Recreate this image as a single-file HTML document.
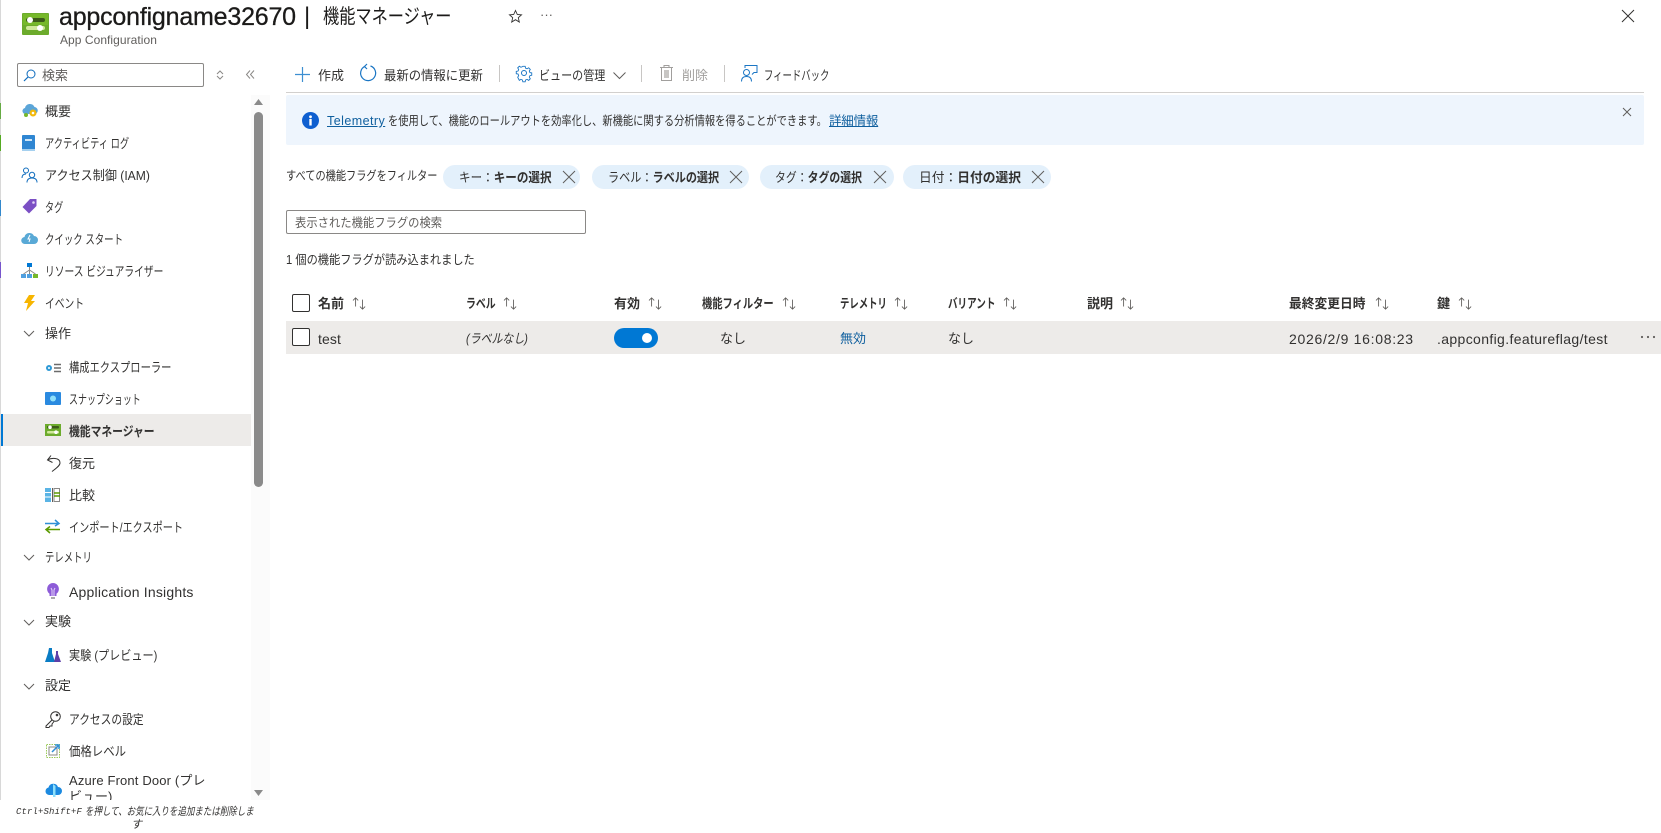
<!DOCTYPE html>
<html lang="ja"><head><meta charset="utf-8"><title>機能マネージャー</title>
<style>
html,body{margin:0;padding:0;background:#fff}
body{width:1661px;height:833px;overflow:hidden;position:relative;font-family:"Liberation Sans","Noto Sans CJK JP",sans-serif;font-size:13px;color:#323130}
.t{position:absolute;white-space:nowrap;line-height:18px;height:18px;margin-top:1px;transform-origin:left center}
.b{font-weight:700}
svg{position:absolute;overflow:visible}
.box{position:absolute;box-sizing:border-box}
.chip{position:absolute;top:165px;height:24px;border-radius:12px;background:#e3f0fb}
.cb{position:absolute;box-sizing:border-box;width:18px;height:18px;border:1px solid #323130;border-radius:2px;background:#fff;left:292px}
</style></head><body>
<!-- left strip -->
<div class="box" style="left:0;top:0;width:1px;height:833px;background:#d8d8d8"></div>
<div class="box" style="left:0;top:103px;width:1px;height:16px;background:#6a4"></div>
<div class="box" style="left:0;top:135px;width:1px;height:16px;background:#5a2"></div>
<div class="box" style="left:0;top:200px;width:1px;height:16px;background:#38c"></div>
<div class="box" style="left:0;top:262px;width:1px;height:16px;background:#75c"></div>

<!-- header -->
<svg style="left:22px;top:13px" width="27" height="22" viewBox="0 0 27 22"><rect width="27" height="22" rx="1" fill="#6cab2c"/><rect x="1" y="1" width="25" height="11" fill="#76b82a"/><rect x="4" y="5" width="19" height="4" rx="2" fill="#3c5a1a"/><circle cx="8" cy="7" r="3" fill="#fff"/><rect x="4" y="13" width="19" height="4" rx="2" fill="#cfe89a"/><circle cx="18" cy="15" r="3" fill="#fff"/></svg>
<div class="t" style="left:59px;top:1px;font-size:25px;line-height:30px;height:30px;color:#1b1a19;letter-spacing:-.2px;-webkit-text-stroke:.3px #1b1a19">appconfigname32670</div>
<div class="t" style="left:304px;top:1px;font-size:24px;line-height:30px;height:30px;color:#1b1a19">|</div>
<div class="t" style="left:323px;top:1px;font-size:20px;line-height:30px;height:30px;color:#1b1a19;transform:scaleX(.81)">機能マネージャー</div>
<svg style="left:508px;top:9px" width="15" height="15" viewBox="0 0 15 15"><path d="M7.5 1.5l1.8 4 4.2.4-3.2 2.8 1 4.3-3.800-2.300-3.800 2.300 1-4.300L1.500 5.900l4.200-.4z" fill="none" stroke="#323130" stroke-width=".9"/></svg>
<div class="t" style="left:540px;top:5px;font-size:13px;color:#605e5c">···</div>
<div class="t" style="left:60px;top:30px;font-size:12px;color:#605e5c;letter-spacing:.05px">App Configuration</div>
<svg style="left:1622px;top:10px" width="12" height="12" viewBox="0 0 12 12"><path d="M0 0L12 12M12 0L0 12" stroke="#323130" fill="none"/></svg>

<!-- side search -->
<div class="box" style="left:17px;top:63px;width:187px;height:24px;border:1px solid #8a8886;border-radius:2px"></div>
<svg style="left:23px;top:69px" width="13" height="13" viewBox="0 0 13 13"><circle cx="8" cy="5" r="4" fill="none" stroke="#0f6cbd"/><path d="M5 8L1 12" stroke="#0f6cbd" stroke-width="1.2"/></svg>
<div class="t" style="left:42px;top:66px;color:#605e5c">検索</div>
<svg style="left:216px;top:70px" width="8" height="10" viewBox="0 0 8 10"><path d="M1 4L4 1L7 4M1 6L4 9L7 6" fill="none" stroke="#8a8886"/></svg>
<svg style="left:246px;top:70px" width="9" height="9" viewBox="0 0 9 9"><path d="M4 .5L.5 4.500 4 8.500M8 .5L4.500 4.500 8 8.500" fill="none" stroke="#8a8886"/></svg>

<!-- scrollbar -->
<div class="box" style="left:251px;top:95px;width:19px;height:705px;background:#fbfbfb"></div>
<svg style="left:253px;top:99px" width="11" height="7"><path d="M5.500 0L10 6H1z" fill="#8a8a8a"/></svg>
<div class="box" style="left:254px;top:112px;width:9px;height:375px;background:#8a8a8a;border-radius:5px"></div>
<svg style="left:253px;top:790px" width="11" height="7"><path d="M1 0H10L5.500 6z" fill="#8a8a8a"/></svg>

<!-- selected -->
<div class="box" style="left:1px;top:414px;width:250px;height:32px;background:#edebe9"></div>
<div class="box" style="left:1px;top:414px;width:2px;height:32px;background:#0078d4"></div>

<!-- nav icons -->
<svg style="left:22px;top:103px" width="16" height="16" viewBox="0 0 16 16"><path d="M4 11a3 3 0 0 1-1-6 5 5 0 0 1 9.500-1A3.500 3.500 0 0 1 12 11z" fill="#5ba5d8"/><circle cx="11" cy="10" r="3.500" fill="#f2b90c"/><circle cx="11" cy="10" r="1.300" fill="#fff"/><circle cx="4" cy="12" r="2" fill="#76b82a"/></svg>
<svg style="left:22px;top:135px" width="14" height="16" viewBox="0 0 14 16"><rect width="13" height="16" rx="1" fill="#2f86d2"/><rect x="3" y="4" width="7" height="2" fill="#cfe6f7"/><rect x="0" y="14" width="13" height="2" fill="#a5d0ef"/></svg>
<svg style="left:21px;top:167px" width="17" height="16" viewBox="0 0 17 16" fill="none" stroke="#0f6cbd"><circle cx="5" cy="3.500" r="2.500"/><path d="M1 11c0-3 2-4 4-4"/><circle cx="11" cy="8" r="2.700"/><path d="M6 15.500c0-3 2-4.500 5-4.500s5 1.500 5 4.500"/></svg>
<svg style="left:22px;top:199px" width="15" height="15" viewBox="0 0 15 15"><path d="M8 0h6.500v7L7 14.500.5 8z" fill="#7b4fc4"/><circle cx="11.500" cy="3.500" r="1.300" fill="#e3d4f7"/></svg>
<svg style="left:21px;top:232px" width="17" height="13" viewBox="0 0 17 13"><path d="M4 12a3.500 3.500 0 0 1-.5-7A5 5 0 0 1 13 4a4 4 0 0 1 0 8z" fill="#59a9d6"/><path d="M9 3L7 7h2l-1 3" stroke="#fff" fill="none"/></svg>
<svg style="left:21px;top:263px" width="17" height="16" viewBox="0 0 17 16"><rect x="6" y="0" width="5" height="4" fill="#0078d4"/><rect x="0" y="11" width="5" height="4" fill="#50a0e0"/><rect x="12" y="11" width="5" height="4" fill="#76b82a"/><rect x="6" y="11" width="5" height="4" fill="#50a0e0"/><path d="M8.500 4v7M8.500 7L2.500 11M8.500 7l6 4" stroke="#8a8886" fill="none"/></svg>
<svg style="left:24px;top:295px" width="11" height="16" viewBox="0 0 11 16"><path d="M5 0h6L7 6h4L2 16l2-8H0z" fill="#f7b500"/></svg>
<svg style="left:23px;top:330px" width="12" height="7" viewBox="0 0 12 7"><path d="M1 1l5 5 5-5" fill="none" stroke="#605e5c"/></svg>
<svg style="left:23px;top:554px" width="12" height="7" viewBox="0 0 12 7"><path d="M1 1l5 5 5-5" fill="none" stroke="#605e5c"/></svg>
<svg style="left:23px;top:619px" width="12" height="7" viewBox="0 0 12 7"><path d="M1 1l5 5 5-5" fill="none" stroke="#605e5c"/></svg>
<svg style="left:23px;top:683px" width="12" height="7" viewBox="0 0 12 7"><path d="M1 1l5 5 5-5" fill="none" stroke="#605e5c"/></svg>

<svg style="left:45px;top:363px" width="16" height="10" viewBox="0 0 16 10"><circle cx="4" cy="5" r="3" fill="#2f9ad6"/><circle cx="4" cy="5" r="1" fill="#fff"/><path d="M9 1.500h7M9 5h7M9 8.500h7" stroke="#6b6b6b" stroke-width="1.500"/></svg>
<svg style="left:45px;top:391px" width="16" height="14" viewBox="0 0 16 14"><rect y="1" width="16" height="13" rx="1" fill="#2a8ae0"/><circle cx="8" cy="7.500" r="3" fill="#8fe0fa"/></svg>
<svg style="left:45px;top:424px" width="16" height="12" viewBox="0 0 16 12"><rect width="16" height="12" fill="#6cab2c"/><rect x="2" y="2" width="12" height="2.500" rx="1" fill="#3c5a1a"/><circle cx="5" cy="3.200" r="1.800" fill="#fff"/><rect x="2" y="7" width="12" height="2.500" rx="1" fill="#cfe89a"/><circle cx="11" cy="8.200" r="1.800" fill="#fff"/></svg>
<svg style="left:46px;top:455px" width="15" height="17" viewBox="0 0 15 17"><path d="M5 .5L1.500 5l5 2.500M1.500 5C5 3 14 2 14 8c0 3-5 6-8 8.500" fill="none" stroke="#323130"/></svg>
<svg style="left:45px;top:488px" width="15" height="14" viewBox="0 0 15 14"><rect width="6" height="14" fill="#5ab4e5"/><path d="M0 4.500h6M0 9h6" stroke="#fff"/><path d="M7.500 0v14" stroke="#605e5c"/><rect x="9" y=".5" width="5.500" height="13" fill="none" stroke="#8a8886"/><path d="M9 5h6M9 8h6" stroke="#5b9a00" stroke-width="1.500"/></svg>
<svg style="left:45px;top:519px" width="15" height="15" viewBox="0 0 15 15" fill="none" stroke-width="1.500"><path d="M0 4.500h14M10 1l4 3.500L10 7" stroke="#2f8fd6"/><path d="M15 10.500H1M5 7.500l-4 3 4 3.500" stroke="#5b9a00"/></svg>
<svg style="left:47px;top:583px" width="12" height="17" viewBox="0 0 12 17"><path d="M6 0a6 6 0 0 1 3.500 10.800V13h-7v-2.200A6 6 0 0 1 6 0z" fill="#8d5cd8"/><path d="M4 5l1 2v6M8 5L7 7v6" stroke="#e3d4f7" fill="none"/><path d="M4 15h4" stroke="#aaa" stroke-width="2"/></svg>
<svg style="left:45px;top:648px" width="16" height="14" viewBox="0 0 16 14"><path d="M4 0h3v5l3 9H0l3-9z" fill="#0a7cc4"/><path d="M11 3h2v3l3 8H9l2-8z" fill="#5d3fa8"/></svg>
<svg style="left:45px;top:711px" width="16" height="17" viewBox="0 0 16 17" fill="none" stroke="#323130"><circle cx="10.500" cy="5.500" r="4.800"/><path d="M7 9L1 15v1.500h3l1-1.500h2v-2l2-2.500"/><circle cx="12" cy="4" r=".8"/></svg>
<svg style="left:46px;top:744px" width="14" height="14" viewBox="0 0 14 14"><rect x=".5" y=".5" width="13" height="13" fill="none" stroke="#9bc95a" stroke-dasharray="1.500 1"/><rect x="3" y="3" width="8" height="8" fill="none" stroke="#8a8886"/><path d="M6 8L13 1M9 1h4v4" stroke="#2f8fd6" fill="none" stroke-width="1.500"/></svg>
<svg style="left:45px;top:782px" width="17" height="15" viewBox="0 0 17 15"><path d="M4 13a3.800 3.800 0 0 1-.5-7.500A5 5 0 0 1 13 5a4 4 0 0 1 0 8z" fill="#1c8ae0"/><path d="M8 2v13h2.500V4z" fill="#8fe0fa"/></svg>

<!-- nav labels -->
<div class="t" style="left:45px;top:102px">概要</div>
<div class="t" style="left:45px;top:134px;transform:scaleX(.71)">アクティビティ ログ</div>
<div class="t" style="left:45px;top:166px;transform:scaleX(.93)">アクセス制御 (IAM)</div>
<div class="t" style="left:45px;top:198px;transform:scaleX(.7)">タグ</div>
<div class="t" style="left:45px;top:230px;transform:scaleX(.725)">クイック スタート</div>
<div class="t" style="left:45px;top:262px;transform:scaleX(.75)">リソース ビジュアライザー</div>
<div class="t" style="left:45px;top:294px;transform:scaleX(.75)">イベント</div>
<div class="t" style="left:45px;top:324px">操作</div>
<div class="t" style="left:69px;top:358px;transform:scaleX(.79)">構成エクスプローラー</div>
<div class="t" style="left:69px;top:390px;transform:scaleX(.69)">スナップショット</div>
<div class="t b" style="left:69px;top:422px;transform:scaleX(.83)">機能マネージャー</div>
<div class="t" style="left:69px;top:454px">復元</div>
<div class="t" style="left:69px;top:486px">比較</div>
<div class="t" style="left:69px;top:518px;transform:scaleX(.78)">インポート/エクスポート</div>
<div class="t" style="left:45px;top:548px;transform:scaleX(.72)">テレメトリ</div>
<div class="t" style="left:69px;top:582px;font-size:14px;letter-spacing:.2px">Application Insights</div>
<div class="t" style="left:45px;top:612px">実験</div>
<div class="t" style="left:69px;top:646px;transform:scaleX(.855)">実験 (プレビュー)</div>
<div class="t" style="left:45px;top:676px">設定</div>
<div class="t" style="left:69px;top:710px;transform:scaleX(.825)">アクセスの設定</div>
<div class="t" style="left:69px;top:742px;transform:scaleX(.877)">価格レベル</div>
<div class="box" style="left:69px;top:771px;width:170px;height:29px;overflow:hidden"><div class="t" style="left:0;top:0;letter-spacing:.15px">Azure Front Door (プレ</div><div class="t" style="left:0;top:16px">ビュー)</div></div>
<div class="box" style="left:0;top:800px;width:270px;height:33px;background:#fff"></div>
<div class="t" style="left:16px;top:804px;font-size:9px;font-family:'Liberation Mono',monospace;font-style:italic;line-height:15px;height:15px;letter-spacing:.1px">Ctrl+Shift+F</div>
<div class="t" style="left:85px;top:804px;font-size:11px;font-style:italic;line-height:15px;height:15px;transform:scaleX(.77)">を押して、お気に入りを追加または削除しま</div>
<div class="t" style="left:131px;top:817px;font-size:11px;font-style:italic;line-height:15px;height:15px">す</div>

<!-- toolbar -->
<svg style="left:295px;top:67px" width="15" height="15" viewBox="0 0 15 15"><path d="M7.500 0v15M0 7.500h15" stroke="#3d8fd1" stroke-width="1.200"/></svg>
<div class="t" style="left:318px;top:66px">作成</div>
<svg style="left:359px;top:64px" width="18" height="18" viewBox="0 0 18 18" fill="none" stroke="#1b76c4" stroke-width="1.200"><path d="M6 2.300A7.500 7.500 0 1 0 11.500 2"/><path d="M8 0L5.500 2.500 8 5"/></svg>
<div class="t" style="left:384px;top:66px;transform:scaleX(.95)">最新の情報に更新</div>
<div class="box" style="left:499px;top:65px;width:1px;height:17px;background:#c8c6c4"></div>
<svg style="left:516px;top:65px" width="16" height="16" viewBox="0 0 16 16" fill="none" stroke="#1b76c4"><circle cx="8" cy="8" r="2.500"/><path d="M6.700.6h2.600l.4 2 1.700.7 1.800-1.100 1.800 1.800-1.100 1.800.7 1.700 2 .4v2.600l-2 .4-.7 1.700 1.100 1.800-1.800 1.800-1.800-1.100-1.700.7-.4 2H6.700l-.4-2-1.700-.7-1.800 1.100L1 12.700l1.100-1.800-.7-1.700-2-.4V6.200l2-.4.7-1.700L1 2.300 2.800.5l1.800 1.100 1.700-.7z" transform="translate(.8 .8) scale(.9)"/></svg>
<div class="t" style="left:539px;top:66px;transform:scaleX(.85)">ビューの管理</div>
<svg style="left:613px;top:72px" width="13" height="7" viewBox="0 0 13 7"><path d="M.5.500l6 6 6-6" fill="none" stroke="#605e5c"/></svg>
<div class="box" style="left:641px;top:65px;width:1px;height:17px;background:#c8c6c4"></div>
<svg style="left:660px;top:65px" width="13" height="16" viewBox="0 0 13 16" fill="none" stroke="#a19f9d"><path d="M0 2.500h13M4 2.500V.5h5v2M1.500 2.500v13h10v-13"/><rect x="4" y="5" width="5" height="8" fill="#c8c6c4" stroke="none"/></svg>
<div class="t" style="left:682px;top:66px;color:#a19f9d">削除</div>
<div class="box" style="left:724px;top:65px;width:1px;height:17px;background:#c8c6c4"></div>
<svg style="left:741px;top:65px" width="17" height="17" viewBox="0 0 17 17" fill="none" stroke="#1b76c4"><circle cx="5.500" cy="7.500" r="3"/><path d="M.5 16.500c0-3.500 2-5 5-5s5 1.500 5 5"/><path d="M4 3V.5h12v7h-3l-2 2"/></svg>
<div class="t" style="left:764px;top:66px;transform:scaleX(.72)">フィードバック</div>
<div class="box" style="left:286px;top:92px;width:1358px;height:1px;background:#d2d0ce"></div>

<!-- banner -->
<div class="box" style="left:286px;top:95px;width:1358px;height:50px;background:#eef5fd;border-radius:2px"></div>
<svg style="left:302px;top:112px" width="17" height="17" viewBox="0 0 17 17"><circle cx="8.500" cy="8.500" r="8.500" fill="#0f5fd0"/><rect x="7.300" y="7" width="2.400" height="6.500" fill="#fff"/><circle cx="8.500" cy="4.800" r="1.400" fill="#fff"/></svg>
<div class="t" style="left:327px;top:111px;font-size:12.500px;color:#0f5f9e;text-decoration:underline;letter-spacing:.45px">Telemetry</div>
<div class="t" style="left:388px;top:111px;font-size:12.500px;transform:scaleX(.82)">を使用して、機能のロールアウトを効率化し、新機能に関する分析情報を得ることができます。</div>
<div class="t" style="left:829px;top:111px;font-size:12.500px;color:#0f5f9e;text-decoration:underline;letter-spacing:-.2px">詳細情報</div>
<svg style="left:1623px;top:108px" width="8" height="8" viewBox="0 0 8 8"><path d="M0 0L8 8M8 0L0 8" stroke="#605e5c" fill="none"/></svg>

<!-- filters -->
<div class="t" style="left:286px;top:166px;font-size:12.500px;transform:scaleX(.815)">すべての機能フラグをフィルター</div>
<div class="chip" style="left:443px;width:137px"></div>
<div class="t" style="left:459px;top:168px;transform:scaleX(.89)">キー：<span class="b">キーの選択</span></div>
<svg style="left:563px;top:171px" width="12" height="12"><path d="M0 0L12 12M12 0L0 12" stroke="#605e5c" fill="none"/></svg>
<div class="chip" style="left:592px;width:157px"></div>
<div class="t" style="left:608px;top:168px;transform:scaleX(.855)">ラベル：<span class="b">ラベルの選択</span></div>
<svg style="left:730px;top:171px" width="12" height="12"><path d="M0 0L12 12M12 0L0 12" stroke="#605e5c" fill="none"/></svg>
<div class="chip" style="left:760px;width:134px"></div>
<div class="t" style="left:775px;top:168px;transform:scaleX(.836)">タグ：<span class="b">タグの選択</span></div>
<svg style="left:874px;top:171px" width="12" height="12"><path d="M0 0L12 12M12 0L0 12" stroke="#605e5c" fill="none"/></svg>
<div class="chip" style="left:903px;width:148px"></div>
<div class="t" style="left:919px;top:168px;transform:scaleX(.98)">日付：<span class="b">日付の選択</span></div>
<svg style="left:1032px;top:171px" width="12" height="12"><path d="M0 0L12 12M12 0L0 12" stroke="#605e5c" fill="none"/></svg>

<!-- list search -->
<div class="box" style="left:286px;top:210px;width:300px;height:24px;border:1px solid #8a8886;border-radius:2px"></div>
<div class="t" style="left:295px;top:213px;font-size:12.500px;color:#605e5c;transform:scaleX(.905)">表示された機能フラグの検索</div>
<div class="t" style="left:286px;top:250px;font-size:12.500px;transform:scaleX(.897)">1 個の機能フラグが読み込まれました</div>

<!-- table header -->
<div class="cb" style="top:294px"></div>
<div class="t b" style="left:318px;top:294px">名前</div>
<div class="t b" style="left:466px;top:294px;transform:scaleX(.76)">ラベル</div>
<div class="t b" style="left:614px;top:294px">有効</div>
<div class="t b" style="left:702px;top:294px;transform:scaleX(.79)">機能フィルター</div>
<div class="t b" style="left:840px;top:294px;transform:scaleX(.72)">テレメトリ</div>
<div class="t b" style="left:948px;top:294px;transform:scaleX(.735)">バリアント</div>
<div class="t b" style="left:1087px;top:294px">説明</div>
<div class="t b" style="left:1289px;top:294px;transform:scaleX(.98)">最終変更日時</div>
<div class="t b" style="left:1437px;top:294px">鍵</div>
<svg style="left:352px;top:297px" width="15" height="13" viewBox="0 0 17 15" fill="none" stroke="#605e5c"><path d="M4 11V1M1 4l3-3 3 3M12 3v11M9 11l3 3 3-3"/></svg>
<svg style="left:503px;top:297px" width="15" height="13" viewBox="0 0 17 15" fill="none" stroke="#605e5c"><path d="M4 11V1M1 4l3-3 3 3M12 3v11M9 11l3 3 3-3"/></svg>
<svg style="left:648px;top:297px" width="15" height="13" viewBox="0 0 17 15" fill="none" stroke="#605e5c"><path d="M4 11V1M1 4l3-3 3 3M12 3v11M9 11l3 3 3-3"/></svg>
<svg style="left:782px;top:297px" width="15" height="13" viewBox="0 0 17 15" fill="none" stroke="#605e5c"><path d="M4 11V1M1 4l3-3 3 3M12 3v11M9 11l3 3 3-3"/></svg>
<svg style="left:894px;top:297px" width="15" height="13" viewBox="0 0 17 15" fill="none" stroke="#605e5c"><path d="M4 11V1M1 4l3-3 3 3M12 3v11M9 11l3 3 3-3"/></svg>
<svg style="left:1003px;top:297px" width="15" height="13" viewBox="0 0 17 15" fill="none" stroke="#605e5c"><path d="M4 11V1M1 4l3-3 3 3M12 3v11M9 11l3 3 3-3"/></svg>
<svg style="left:1120px;top:297px" width="15" height="13" viewBox="0 0 17 15" fill="none" stroke="#605e5c"><path d="M4 11V1M1 4l3-3 3 3M12 3v11M9 11l3 3 3-3"/></svg>
<svg style="left:1375px;top:297px" width="15" height="13" viewBox="0 0 17 15" fill="none" stroke="#605e5c"><path d="M4 11V1M1 4l3-3 3 3M12 3v11M9 11l3 3 3-3"/></svg>
<svg style="left:1458px;top:297px" width="15" height="13" viewBox="0 0 17 15" fill="none" stroke="#605e5c"><path d="M4 11V1M1 4l3-3 3 3M12 3v11M9 11l3 3 3-3"/></svg>

<!-- row -->
<div class="box" style="left:286px;top:321px;width:1375px;height:33px;background:#edebe9"></div>
<div class="cb" style="top:328px"></div>
<div class="t" style="left:318px;top:329px;font-size:14px;letter-spacing:.1px">test</div>
<div class="t" style="left:466px;top:329px;font-style:italic;transform:scaleX(.84)">(ラベルなし)</div>
<div class="box" style="left:614px;top:328px;width:44px;height:20px;border-radius:10px;background:#0078d4"></div>
<div class="box" style="left:642px;top:333px;width:10px;height:10px;border-radius:50%;background:#fff"></div>
<div class="t" style="left:720px;top:329px">なし</div>
<div class="t" style="left:840px;top:329px;color:#0f5f9e">無効</div>
<div class="t" style="left:948px;top:329px">なし</div>
<div class="t" style="left:1289px;top:329px;font-size:14px;letter-spacing:.7px">2026/2/9 16:08:23</div>
<div class="t" style="left:1437px;top:329px;font-size:14px;letter-spacing:.36px">.appconfig.featureflag/test</div>
<svg style="left:1640px;top:335px" width="16" height="4"><circle cx="2" cy="2" r="1.100" fill="#605e5c"/><circle cx="8" cy="2" r="1.100" fill="#605e5c"/><circle cx="14" cy="2" r="1.100" fill="#605e5c"/></svg>
</body></html>
